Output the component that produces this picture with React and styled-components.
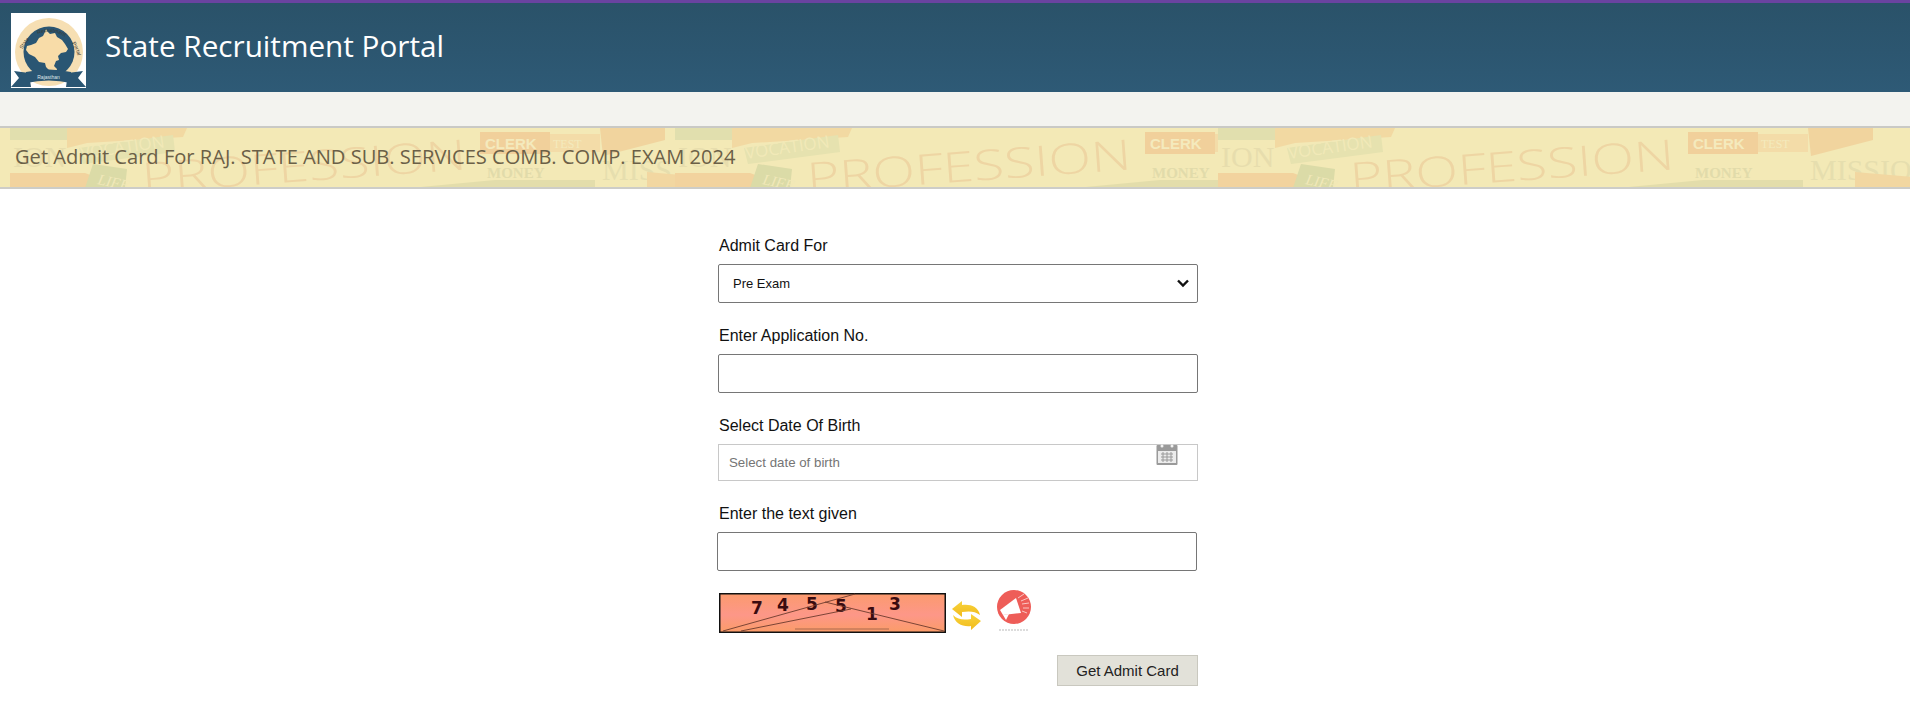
import React from "react";
import styled, { createGlobalStyle } from "styled-components";

const GlobalStyle = createGlobalStyle`
  html, body {
    margin: 0;
    padding: 0;
    background: #fff;
  }
  * {
    box-sizing: border-box;
  }
`;

const Page = styled.div`
  width: 100%;
  min-height: 716px;
  background: #fff;
  font-family: "Liberation Sans", Arial, sans-serif;
  color: #111;
`;

const Header = styled.header`
  height: 92px;
  display: flex;
  align-items: flex-start;
  border-top: 3px solid #6a43a0;
  background: linear-gradient(180deg, #2a5269 0%, #2c5670 55%, #2e5a76 100%);
  padding: 10px 0 0 11px;
`;

const Logo = styled.svg`
  width: 75px;
  height: 75px;
  flex: none;
  display: block;
`;

const Brand = styled.h1`
  margin: 13px 0 0 19px;
  font-family: "Open Sans", "Noto Sans", sans-serif;
  font-weight: 400;
  font-size: 29.7px;
  line-height: 40px;
  color: #fff;
`;

const MenuStrip = styled.div`
  height: 34px;
  background: #f3f3ef;
`;

const TitleBand = styled.div`
  position: relative;
  height: 63px;
  overflow: hidden;
  background: #f3e9b6;
  border-top: 2px solid #c9c9c5;
  border-bottom: 2px solid #cdcdc8;
  display: flex;
  align-items: center;
  padding: 0 0 0 15px;
`;

const BandArt = styled.svg`
  position: absolute;
  left: 0;
  top: 0;
  width: 1910px;
  height: 60px;
`;

const PageTitle = styled.h2`
  position: relative;
  margin: 0 0 2px;
  font-family: "Open Sans", "Noto Sans", sans-serif;
  font-weight: 400;
  font-size: 20.1px;
  line-height: 28px;
  color: #6b6047;
`;

const Form = styled.form`
  width: 480px;
  margin-left: 718px;
  padding-top: 46px;
`;

const Label = styled.label`
  display: block;
  height: 21px;
  padding: 1px 0 0 1px;
  margin: 0 0 8px;
  font-size: 16px;
  line-height: 20px;
  color: #111;
`;

const Field = styled.div`
  position: relative;
  margin-bottom: 22px;
`;

const baseField = `
  display: block;
  width: 480px;
  height: 39px;
  background: #fff;
  border: 1px solid #767676;
  border-radius: 2px;
  font-family: "Liberation Sans", Arial, sans-serif;
  outline: none;
`;

const Select = styled.select`
  ${baseField}
  appearance: none;
  padding: 0 0 0 14px;
  font-size: 13px;
  color: #111;
`;

const Chevron = styled.svg`
  position: absolute;
  right: 9px;
  top: 15px;
  width: 12px;
  height: 9px;
  pointer-events: none;
`;

const TextInput = styled.input`
  ${baseField}
  margin-left: ${(p) => (p.$shift ? "-1px" : "0")};
`;

const DateInput = styled.input`
  ${baseField}
  height: 37px;
  border: 1px solid #c8c8c8;
  border-radius: 0;
  padding: 0 0 0 10px;
  font-size: 13.3px;
  &::placeholder {
    color: #757575;
    opacity: 1;
  }
`;

const CalendarIcon = styled.svg`
  position: absolute;
  left: 438px;
  top: 0;
  width: 22px;
  height: 21px;
`;

const CaptchaRow = styled.div`
  display: flex;
  align-items: flex-start;
  height: 40px;
  margin: 22px 0 0 1px;
`;

const Captcha = styled.svg`
  width: 227px;
  height: 40px;
  flex: none;
  display: block;
`;

const Refresh = styled.svg`
  width: 30px;
  height: 32px;
  margin: 7px 0 0 6px;
  flex: none;
`;

const NoticeIcon = styled.svg`
  width: 38px;
  height: 44px;
  margin: -3px 0 0 13px;
  flex: none;
`;

const Actions = styled.div`
  display: flex;
  justify-content: flex-end;
  width: 480px;
  margin-top: 22px;
`;

const Submit = styled.button`
  width: 141px;
  height: 31px;
  padding: 0;
  background: #e2e1d9;
  border: 1px solid #c9c8bf;
  font-family: "Liberation Sans", Arial, sans-serif;
  font-size: 15px;
  color: #222;
`;

// one repeat of the faded "career words" collage behind the page title
function CollageTile({ x }) {
  return (
    <g transform={`translate(${x} 0)`}>
      <rect x="-65" y="0" width="700" height="60" fill="#f3e9b6" />
      <g opacity="0.48">
        <rect x="-65" y="-2" width="60" height="14" fill="#cfd6a6" />
        <path d="M-8 0H112L108 9 12 15 -8 20Z" fill="#f2c88e" />
        <path d="M4 20 98 7 100 24 8 36Z" fill="#d8dba8" />
        <text x="6" y="31" transform="rotate(-8 6 31)" fontFamily="Open Sans" fontSize="17" fill="#f0e9ba">VOCATION</text>
        <text x="-62" y="39" fontFamily="Liberation Serif" fontSize="30" fill="#dcd2a4">ION</text>
        <path d="M-65 45H10L50 60H-65Z" fill="#f1bd85" />
        <path d="M18 36 52 41 50 60H10Z" fill="#c2cc98" />
        <text x="22" y="56" transform="rotate(12 22 56)" fontFamily="Liberation Serif" fontStyle="italic" fontSize="15" fill="#eee8bd">LIFE</text>
        <text x="68" y="65" transform="rotate(-4.2 68 65)" fontFamily="Open Sans" fontWeight="300" fontSize="42" textLength="325" lengthAdjust="spacingAndGlyphs" fill="#e9c08f">PROFESSION</text>
        <rect x="405" y="4" width="70" height="22" fill="#efb67e" />
        <text x="410" y="21" fontFamily="Liberation Sans" fontWeight="700" fontSize="15" fill="#f7ecc5">CLERK</text>
        <rect x="475" y="6" width="50" height="18" fill="#f3cf9a" />
        <text x="478" y="20" fontFamily="Liberation Serif" fontSize="12" fill="#f6ecc4">TEST</text>
        <path d="M525 0H590V12L528 28Z" fill="#efbe86" />
        <text x="412" y="50" fontFamily="Liberation Serif" fontWeight="700" fontSize="15" fill="#cfcd9f">MONEY</text>
        <path d="M335 60 420 52H520V60Z" fill="#d3d2a0" />
        <text x="527" y="52" fontFamily="Liberation Serif" fontSize="30" fill="#d8d3a6">MISSION</text>
        <path d="M572 44 640 50V60H572Z" fill="#f1c48c" />
      </g>
    </g>
  );
}

function StateLogo() {
  return (
    <Logo viewBox="0 0 75 75">
      <rect width="75" height="75" fill="#fff" />
      <circle cx="38" cy="39" r="34" fill="#f6dfb3" />
      <circle cx="38" cy="39" r="25.5" fill="#2a5673" />
      <path
        d="M36 18l3 3 5-1 2 4 5 3 3 4 3 5-2 3-5 1-3 3 1 4-3 1-2 5 3 3-1 4-5-1-5-5-1-4-6-1-4-5-6-3-3-4 1-4 4-1 5-2 3-5 4-2 2-4 1-3Z"
        fill="#f8dca8"
      />
      <path d="M0 74 8 65 3 58 18 60 20 74Z" fill="#2a5673" />
      <path d="M75 74 67 65 72 58 57 60 55 74Z" fill="#2a5673" />
      <path d="M15 59Q38 54 60 59V70Q38 65 15 70Z" fill="#2a5673" />
      <text x="37.5" y="65.5" textAnchor="middle" fontFamily="Liberation Sans" fontSize="5" fill="#dfe7ea">Rajasthan</text>
      <path id="logoArc" d="M9 48A28.5 28.5 0 0 1 67 48" fill="none" />
      <g fontFamily="Liberation Sans" fontSize="5.2" fill="#3c3a30">
        <text><textPath href="#logoArc" startOffset="12">State</textPath></text>
        <text><textPath href="#logoArc" startOffset="34">Recruitment</textPath></text>
        <text><textPath href="#logoArc" startOffset="72">Portal</textPath></text>
      </g>
    </Logo>
  );
}

export default function App() {
  return (
    <Page>
      <GlobalStyle />
      <Header>
        <StateLogo />
        <Brand>State Recruitment Portal</Brand>
      </Header>
      <MenuStrip />
      <TitleBand>
        <BandArt viewBox="0 0 1910 60">
          <CollageTile x={75} />
          <CollageTile x={740} />
          <CollageTile x={1283} />
        </BandArt>
        <PageTitle>Get Admit Card For RAJ. STATE AND SUB. SERVICES COMB. COMP. EXAM 2024</PageTitle>
      </TitleBand>
      <Form>
        <Label>Admit Card For</Label>
        <Field>
          <Select defaultValue="pre">
            <option value="pre">Pre Exam</option>
          </Select>
          <Chevron viewBox="0 0 12 9">
            <path d="M1 1.5 6 6.5 11 1.5" fill="none" stroke="#111" strokeWidth="2.4" />
          </Chevron>
        </Field>
        <Label>Enter Application No.</Label>
        <Field>
          <TextInput type="text" />
        </Field>
        <Label>Select Date Of Birth</Label>
        <Field>
          <DateInput type="text" placeholder="Select date of birth" />
          <CalendarIcon viewBox="0 0 22 21">
            <rect x="0.5" y="1" width="21" height="20" rx="1" fill="#9a9a9a" />
            <rect x="2" y="7" width="18" height="12" fill="#ececec" />
            <path d="M5 10h12M5 13h12M5 16h12M7 8v10M11 8v10M15 8v10" stroke="#9a9a9a" strokeWidth="1" fill="none" />
            <circle cx="6" cy="2" r="1.5" fill="#f2f2f2" />
            <circle cx="16" cy="2" r="1.5" fill="#f2f2f2" />
          </CalendarIcon>
        </Field>
        <Label>Enter the text given</Label>
        <TextInput type="text" $shift />
        <CaptchaRow>
          <Captcha viewBox="0 0 227 40">
            <defs>
              <linearGradient id="captchaBg" x1="0" y1="0" x2="0" y2="1">
                <stop offset="0" stopColor="#fb9a6e" />
                <stop offset="0.55" stopColor="#fd9788" />
                <stop offset="1" stopColor="#fb9c68" />
              </linearGradient>
            </defs>
            <rect x="0.75" y="0.75" width="225.5" height="38.5" fill="url(#captchaBg)" stroke="#111" strokeWidth="1.5" />
            <g fontFamily="DejaVu Sans" fontWeight="700" fontSize="17" fill="#3a0b10">
              <text x="32" y="21">7</text>
              <text x="58" y="18">4</text>
              <text x="87" y="17">5</text>
              <text x="116" y="19">5</text>
              <text x="147" y="27">1</text>
              <text x="170" y="17">3</text>
            </g>
            <g fill="none" stroke="#6d3b2e" strokeWidth="0.9">
              <path d="M4 38 136 1" />
              <path d="M22 38 132 16" />
              <path d="M106 9 225 38" />
            </g>
            <path d="M76 36H170" stroke="#a0654a" strokeWidth="0.9" fill="none" />
          </Captcha>
          <Refresh viewBox="0 0 30 32">
            <defs>
              <linearGradient id="arrowTop" x1="0" y1="0" x2="0" y2="1">
                <stop offset="0" stopColor="#f7d33c" />
                <stop offset="1" stopColor="#f2bb1c" />
              </linearGradient>
            </defs>
            <path d="M0 9 10 1V5C18 4 26 6 28 15 23 11 17 11 10 12V17Z" fill="url(#arrowTop)" />
            <path d="M29 21 19 30V26C11 27 3 24 1 15 6 20 12 20 19 19V14Z" fill="url(#arrowTop)" />
          </Refresh>
          <NoticeIcon viewBox="0 0 38 44">
            <circle cx="19" cy="17" r="17" fill="#ee5d58" />
            <path d="M5 20 21 8 26 23 8 25Z" fill="#fff" />
            <path d="M8 25 11 30 14 24Z" fill="#fff" />
            <path d="M23 8 29 4M26 11 33 8M27 14 34 13M28 18 34 18M27 21 32 23" stroke="#fbd3cf" strokeWidth="0.9" fill="none" />
            <path d="M4 40H34" stroke="#b9b9b9" strokeWidth="1.2" strokeDasharray="2 1" fill="none" />
          </NoticeIcon>
        </CaptchaRow>
        <Actions>
          <Submit type="button">Get Admit Card</Submit>
        </Actions>
      </Form>
    </Page>
  );
}
